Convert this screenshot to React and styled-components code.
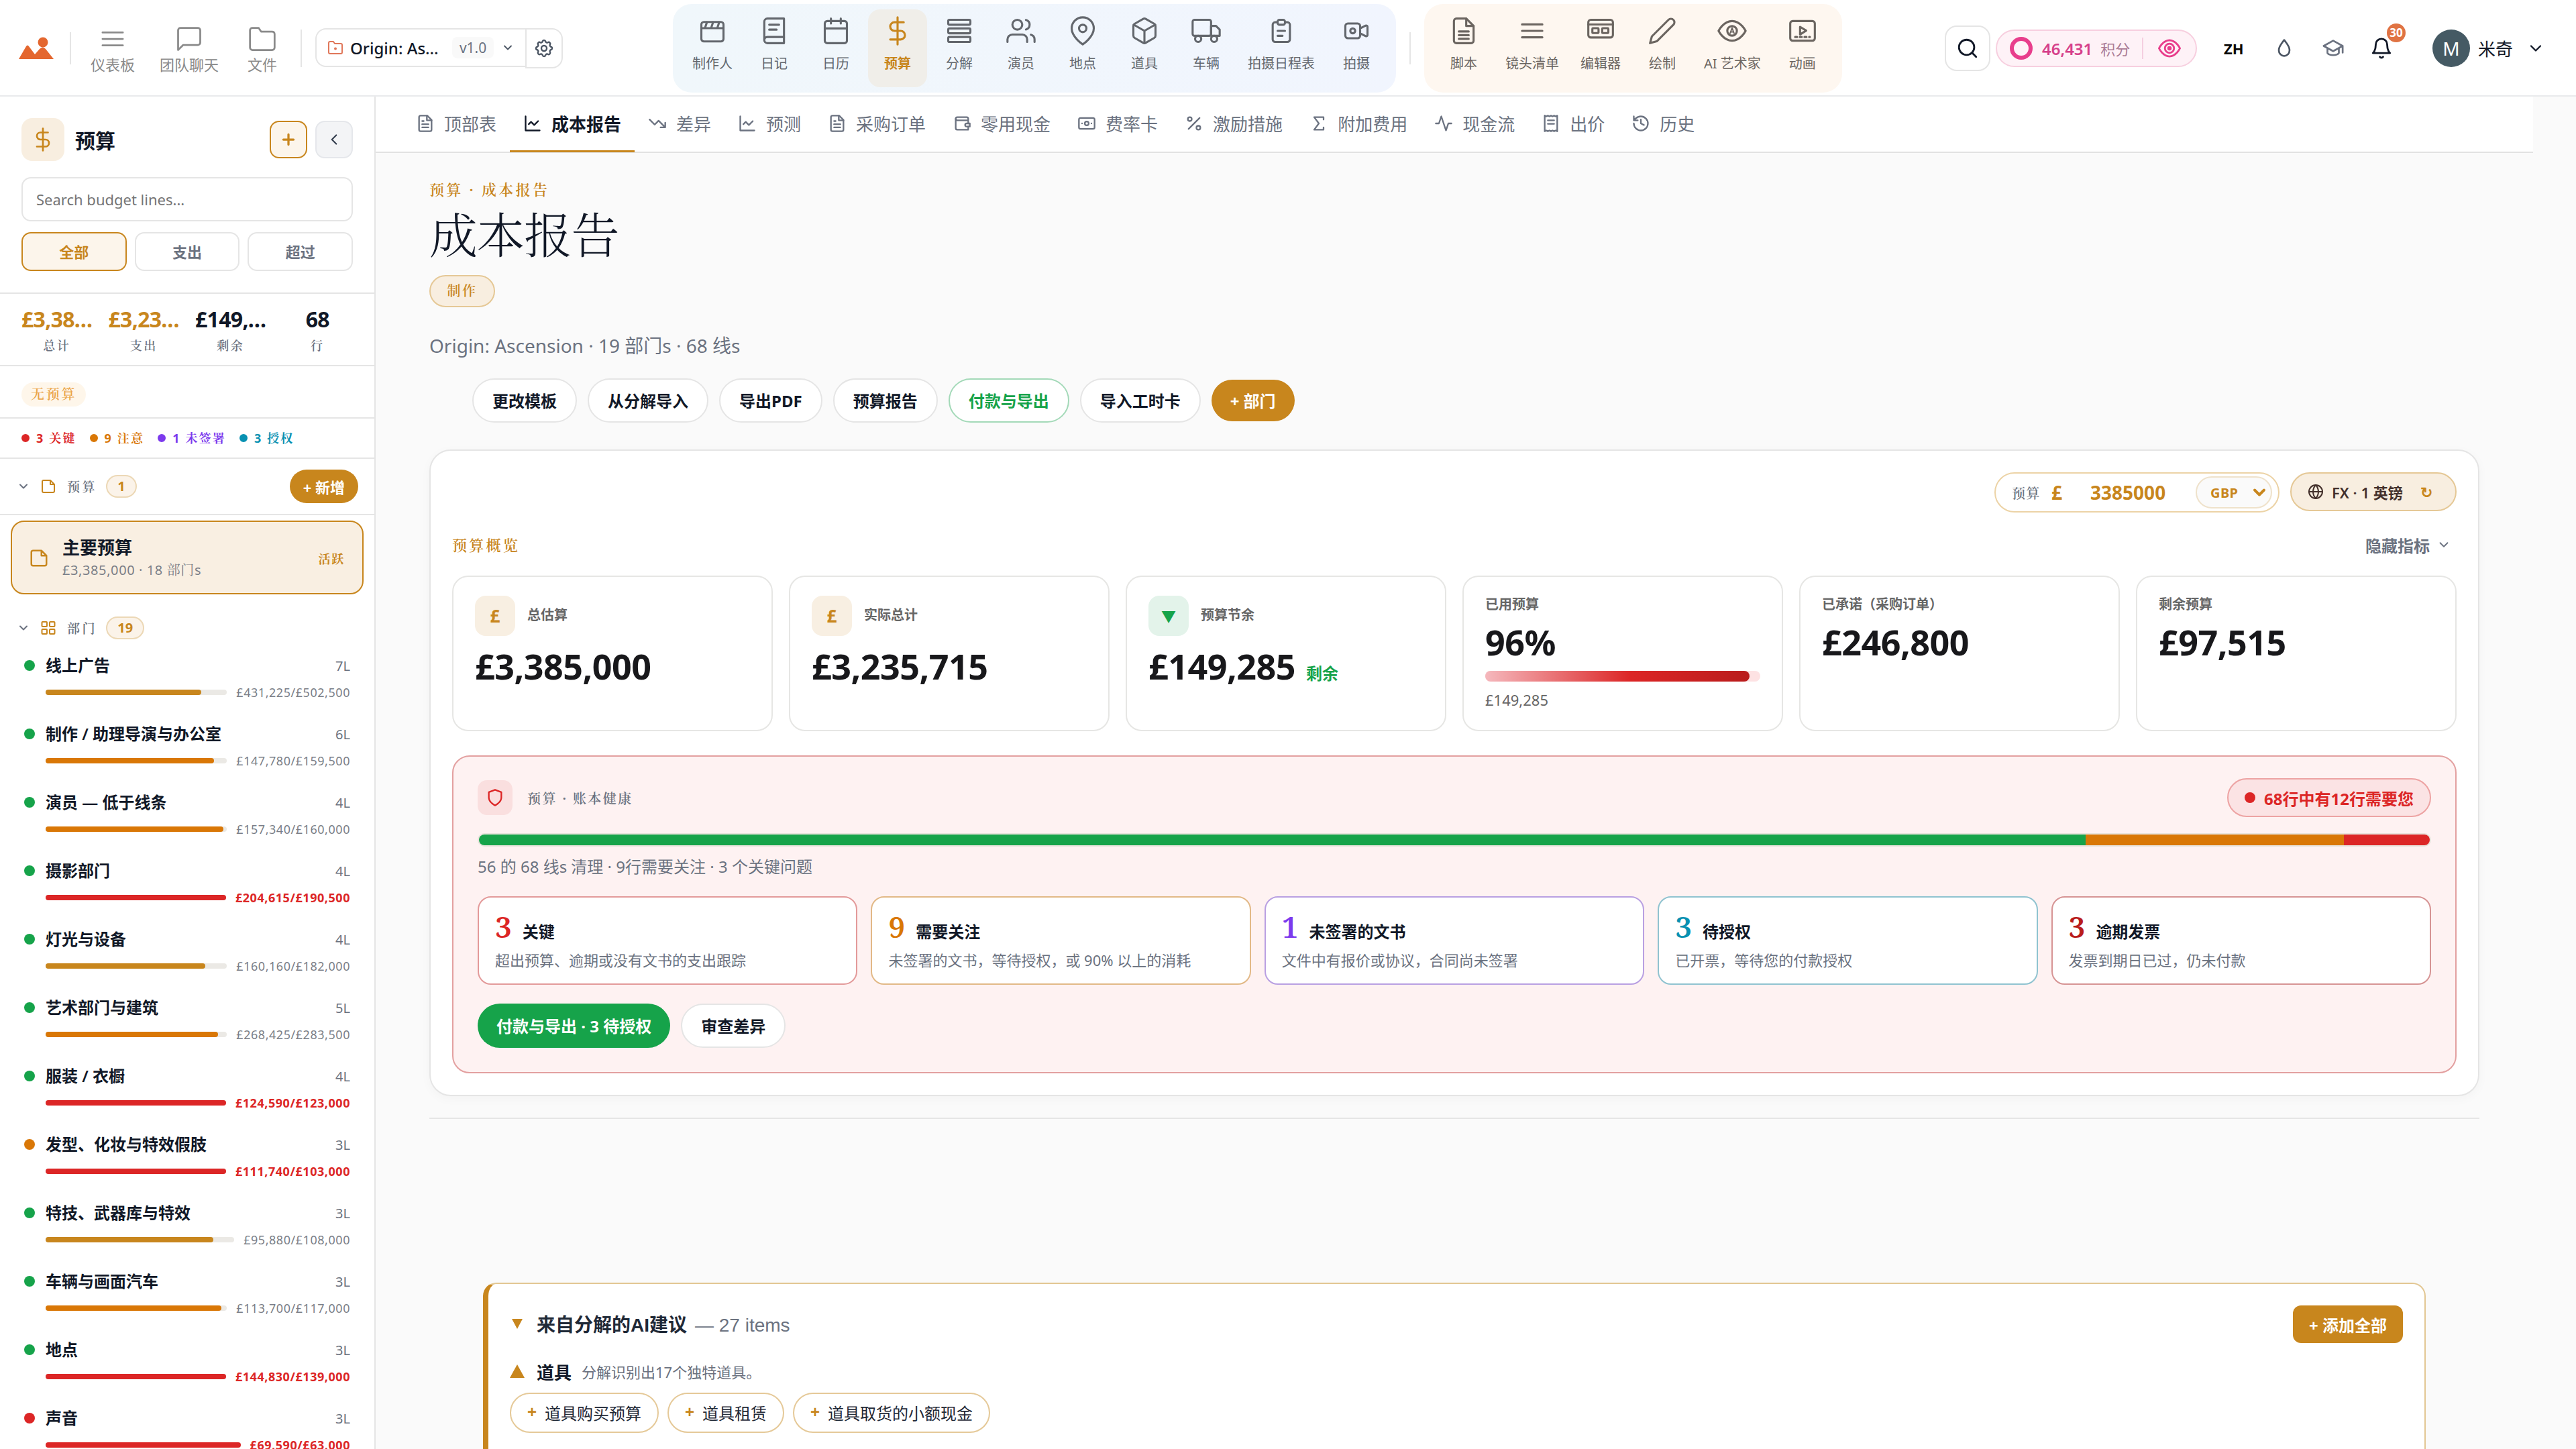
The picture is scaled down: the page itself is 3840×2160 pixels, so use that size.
import React from 'react';
import styled, {createGlobalStyle} from 'styled-components';

const colors = {
  amber: '#c8861d',
  amberSoft: '#f8eee0',
  amberLine: '#e5c896',
  ink: '#111827',
  gray: '#6b7280',
  line: '#e5e5e5',
  green: '#16a34a',
  orange: '#d97706',
  red: '#dc2626',
  purple: '#7c3aed',
  teal: '#0891b2',
  darkRed: '#b91c1c',
};
const sans = "'Noto Sans', 'Noto Sans CJK SC', sans-serif";
const label = "'Noto Sans', 'Noto Serif CJK SC', 'Noto Serif SC', serif";
const serif = "'Noto Serif', 'Noto Serif CJK SC', 'Noto Serif SC', serif";

const GlobalStyle = createGlobalStyle`
  * {
    box-sizing: border-box;
  }
  body {
    margin: 0;
    background: #fafafa;
    font-family: ${sans};
    color: ${colors.ink};
  }
  button {
    font-family: inherit;
    margin: 0;
  }
`;

const Page = styled.div`
  width: 3840px;
  height: 2160px;
  overflow: hidden;
  display: flex;
  flex-direction: column;
  white-space: nowrap;
`;

/* ---------- icons ---------- */
const Svg = styled.svg`
  width: ${(p) => p.$size || 28}px;
  height: ${(p) => p.$size || 28}px;
  flex: none;
  display: block;
  fill: none;
  stroke: currentColor;
  stroke-width: ${(p) => p.$stroke || 2};
  stroke-linecap: round;
  stroke-linejoin: round;
`;

const paths = {
  bars: <path d="M3.75 6.75h16.5M3.75 12h16.5M3.75 17.25h16.5" />,
  chat: <path d="M21 15a2 2 0 0 1-2 2H7l-4 4V5a2 2 0 0 1 2-2h14a2 2 0 0 1 2 2z" />,
  folder: (
    <path d="M22 19a2 2 0 0 1-2 2H4a2 2 0 0 1-2-2V5a2 2 0 0 1 2-2h5l2 3h9a2 2 0 0 1 2 2z" />
  ),
  folderDot: (
    <>
      <path d="M22 19a2 2 0 0 1-2 2H4a2 2 0 0 1-2-2V5a2 2 0 0 1 2-2h5l2 3h9a2 2 0 0 1 2 2z" />
      <circle cx="12" cy="13.5" r="1" />
    </>
  ),
  chevronDown: <path d="m6 9 6 6 6-6" />,
  chevronLeft: <path d="m15 18-6-6 6-6" />,
  plus: <path d="M5 12h14M12 5v14" />,
  gear: (
    <>
      <path d="M10.3 4.3c.4-1.7 2.9-1.7 3.4 0a1.7 1.7 0 0 0 2.6 1.1c1.5-.9 3.3.8 2.4 2.4a1.7 1.7 0 0 0 1 2.5c1.8.4 1.8 2.9 0 3.4a1.7 1.7 0 0 0-1 2.5c.9 1.6-.9 3.3-2.4 2.4a1.7 1.7 0 0 0-2.6 1.1c-.4 1.7-2.9 1.7-3.4 0a1.7 1.7 0 0 0-2.6-1.1c-1.5.9-3.3-.8-2.4-2.4a1.7 1.7 0 0 0-1-2.5c-1.8-.4-1.8-2.9 0-3.4a1.7 1.7 0 0 0 1-2.5c-.9-1.6.9-3.3 2.4-2.4 1 .6 2.3.1 2.6-1.1z" />
      <circle cx="12" cy="12" r="3" />
    </>
  ),
  clapper: (
    <>
      <rect x="3" y="4.8" width="18" height="15.8" rx="2" />
      <path d="M3 9.8h18M7.5 5 6 9.6M12.5 5 11 9.6M17.5 5 16 9.6" />
    </>
  ),
  diary: (
    <>
      <path d="M4 19.5A2.5 2.5 0 0 1 6.5 17H20" />
      <path d="M6.5 2H20v20H6.5A2.5 2.5 0 0 1 4 19.5v-15A2.5 2.5 0 0 1 6.5 2z" />
      <path d="M8 7h8M8 11h6" />
    </>
  ),
  calendar: (
    <>
      <rect x="3" y="4" width="18" height="18" rx="2" />
      <path d="M16 2v4M8 2v4M3 10h18" />
    </>
  ),
  dollar: <path d="M12 1v22M17 5H9.5a3.5 3.5 0 0 0 0 7h5a3.5 3.5 0 0 1 0 7H6" />,
  stack: (
    <>
      <rect x="3" y="3" width="18" height="4" rx="1" />
      <rect x="3" y="10" width="18" height="4" rx="1" />
      <rect x="3" y="17" width="18" height="4" rx="1" />
    </>
  ),
  users: (
    <>
      <path d="M17 21v-2a4 4 0 0 0-4-4H5a4 4 0 0 0-4 4v2" />
      <circle cx="9" cy="7" r="4" />
      <path d="M23 21v-2a4 4 0 0 0-3-3.87M16 3.13a4 4 0 0 1 0 7.75" />
    </>
  ),
  pin: (
    <>
      <path d="M21 10c0 7-9 13-9 13s-9-6-9-13a9 9 0 0 1 18 0z" />
      <circle cx="12" cy="10" r="3" />
    </>
  ),
  box: (
    <>
      <path d="M21 16V8a2 2 0 0 0-1-1.73l-7-4a2 2 0 0 0-2 0l-7 4A2 2 0 0 0 3 8v8a2 2 0 0 0 1 1.73l7 4a2 2 0 0 0 2 0l7-4A2 2 0 0 0 21 16z" />
      <path d="M3.27 6.96 12 12.01l8.73-5.05M12 22.08V12" />
    </>
  ),
  truck: (
    <>
      <rect x="1" y="3" width="15" height="13" rx="1.5" />
      <path d="M16 8h4l3 3v5h-7z" />
      <circle cx="5.5" cy="18.5" r="2.5" />
      <circle cx="18.5" cy="18.5" r="2.5" />
    </>
  ),
  clipboard: (
    <>
      <path d="M9 5H7a2 2 0 0 0-2 2v12a2 2 0 0 0 2 2h10a2 2 0 0 0 2-2V7a2 2 0 0 0-2-2h-2" />
      <rect x="9" y="3" width="6" height="4" rx="1.5" />
      <path d="M9 12h6M9 16h4" />
    </>
  ),
  camera: (
    <>
      <path d="m15 10 4.553-2.276A1 1 0 0 1 21 8.618v6.764a1 1 0 0 1-1.447.894L15 14M5 18h8a2 2 0 0 0 2-2V8a2 2 0 0 0-2-2H5a2 2 0 0 0-2 2v8a2 2 0 0 0 2 2z" />
      <circle cx="9" cy="12" r="2" />
    </>
  ),
  script: (
    <>
      <path d="M14 2H6a2 2 0 0 0-2 2v16a2 2 0 0 0 2 2h12a2 2 0 0 0 2-2V8z" />
      <path d="M14 2v6h6M8 12.5h8M8 15.5h8M8 18.5h8" />
    </>
  ),
  editor: (
    <>
      <rect x="2" y="3" width="20" height="14.4" rx="2" />
      <rect x="5.3" y="9.8" width="5" height="4" rx="0.5" />
      <rect x="13.3" y="9.8" width="5" height="4" rx="0.5" />
      <path d="M2 6.8h20" />
    </>
  ),
  pencil: <path d="M17 3a2.828 2.828 0 1 1 4 4L7.5 20.5 2 22l1.5-5.5L17 3z" />,
  aiEye: (
    <>
      <path d="M1 12s4-8 11-8 11 8 11 8-4 8-11 8-11-8-11-8z" />
      <circle cx="12" cy="12" r="3.9" />
      <path d="m10.4 14 1.6-4.4 1.6 4.4M11 12.9h2" strokeWidth="1" />
    </>
  ),
  animation: (
    <>
      <rect x="2" y="4" width="20" height="16" rx="2" />
      <path d="m10 8.7 5 3.1-5 3.1z" />
      <path d="M6 17h12" strokeDasharray="1.6 2.2" />
    </>
  ),
  search: (
    <>
      <circle cx="11" cy="11" r="8" />
      <path d="m21 21-4.35-4.35" />
    </>
  ),
  target: (
    <>
      <path d="M1 12s4-8.5 11-8.5S23 12 23 12s-4 8.5-11 8.5S1 12 1 12z" />
      <circle cx="12" cy="12" r="4.8" />
      <circle cx="12" cy="12" r="1.3" fill="currentColor" />
    </>
  ),
  drop: <path d="M12 2.7c2.6 3.6 6 7 6 11.3a6 6.6 0 0 1-12 0c0-4.3 3.4-7.7 6-11.3z" />,
  cap: (
    <>
      <path d="m12 4 10 5.5-10 5.5L2 9.5zM22 9.5v7" />
      <path d="M6 12v5c2 3 10 3 12 0v-5" />
    </>
  ),
  bell: (
    <>
      <path d="M6 8a6 6 0 0 1 12 0c0 7 3 9 3 9H3s3-2 3-9" />
      <path d="M10.3 21a1.94 1.94 0 0 0 3.4 0" />
    </>
  ),
  fileText: (
    <>
      <path d="M14.5 2H6a2 2 0 0 0-2 2v16a2 2 0 0 0 2 2h12a2 2 0 0 0 2-2V7.5z" />
      <path d="M14 2v6h6M8 13h8M8 17h8M8 9h2" />
    </>
  ),
  chart: <path d="M3 3v18h18M19 9l-5 5-4-4-3 3" />,
  trendDown: <path d="m22 17-8.5-8.5-5 5L2 7M16 17h6v-6" />,
  wallet: (
    <>
      <path d="M20 8V6a2 2 0 0 0-2-2H6a2 2 0 0 0 0 4h14v4" />
      <path d="M4 6v12c0 1.1.9 2 2 2h14v-4" />
      <path d="M18 12a2 2 0 0 0 0 4h4v-4z" />
    </>
  ),
  banknote: (
    <>
      <rect x="2" y="5" width="20" height="14" rx="2" />
      <circle cx="12" cy="12" r="2.5" />
      <path d="M6 12h.01M18 12h.01" />
    </>
  ),
  percent: (
    <>
      <path d="M19 5 5 19" />
      <circle cx="6.5" cy="6.5" r="2.5" />
      <circle cx="17.5" cy="17.5" r="2.5" />
    </>
  ),
  sigma: <path d="M18 7V4H6l6 8-6 8h12v-3" />,
  activity: <path d="M22 12h-4l-3 9L9 3l-3 9H2" />,
  receipt: (
    <>
      <path d="M4 2v20l2-1 2 1 2-1 2 1 2-1 2 1 2-1 2 1V2l-2 1-2-1-2 1-2-1-2 1-2-1-2 1z" />
      <path d="M8 8h8M8 12.5h8" />
    </>
  ),
  history: <path d="M3 12a9 9 0 1 0 9-9 9.75 9.75 0 0 0-6.74 2.74L3 8M3 3v5h5M12 7v5l4 2" />,
  file: (
    <path d="M15 3H5a2 2 0 0 0-2 2v14a2 2 0 0 0 2 2h14a2 2 0 0 0 2-2V9zM15 3v6h6" />
  ),
  grid: (
    <>
      <rect x="2.5" y="3" width="7.5" height="7" rx="1" />
      <rect x="14" y="3" width="7.5" height="7" rx="1" />
      <rect x="14" y="14" width="7.5" height="7" rx="1" />
      <rect x="2.5" y="14" width="7.5" height="7" rx="1" />
    </>
  ),
  globe: (
    <>
      <circle cx="12" cy="12" r="10" />
      <path d="M2 12h20M12 2a15.3 15.3 0 0 1 4 10 15.3 15.3 0 0 1-4 10 15.3 15.3 0 0 1-4-10 15.3 15.3 0 0 1 4-10z" />
    </>
  ),
  shield: <path d="M12 22s8-4 8-10V5l-8-3-8 3v7c0 6 8 10 8 10z" />,
};

const Icon = ({name, size, stroke}) => (
  <Svg viewBox="0 0 24 24" $size={size} $stroke={stroke}>
    {paths[name]}
  </Svg>
);

/* ---------- header ---------- */
const Header = styled.header`
  height: 144px;
  flex: none;
  display: flex;
  align-items: center;
  background: #fff;
  border-bottom: 2px solid #e9eaec;
  padding: 2px 46px 0 28px;
`;
const HeaderLeft = styled.div`
  display: flex;
  align-items: center;
  width: 975px;
`;
const Logo = styled.svg`
  width: 52px;
  height: 36px;
  margin-right: 24px;
  fill: #e4672f;
`;
const VLine = styled.div`
  width: 2px;
  height: ${(p) => p.$h}px;
  background: ${(p) => p.$color || '#e5e5e5'};
  margin: ${(p) => p.$margin || 0};
`;
const NavItem = styled.div`
  display: flex;
  flex-direction: column;
  align-items: center;
  gap: 2px;
  margin-right: ${(p) => p.$gap}px;
  padding-top: 1px;
  color: #8a8a8a;
  font-size: 22px;
  line-height: 28px;
`;
const ProjectPicker = styled.div`
  display: flex;
  align-items: flex-start;
  height: 60px;
  color: #4b5563;
`;
const ProjectMain = styled.div`
  display: flex;
  align-items: center;
  width: 313px;
  height: 58px;
  padding-left: 16px;
  border: 2px solid ${colors.line};
  border-right: 0;
  border-radius: 16px 0 0 16px;
`;
const ProjectFolder = styled.span`
  color: #e0775a;
  margin-right: 10px;
`;
const ProjectName = styled.span`
  color: ${colors.ink};
  font-size: 24px;
  font-weight: 500;
  width: 152px;
`;
const Version = styled.span`
  width: 62px;
  height: 32px;
  margin-right: 11px;
  border-radius: 8px;
  background: #f9f9f9;
  color: ${colors.gray};
  font-size: 21px;
  line-height: 32px;
  text-align: center;
`;
const ProjectGear = styled.div`
  display: flex;
  align-items: center;
  justify-content: center;
  width: 56px;
  height: 60px;
  border: 2px solid ${colors.line};
  border-radius: 0 16px 16px 0;
`;
const ToolGroup = styled.div`
  display: flex;
  gap: 4px;
  height: 132px;
  padding: 8px 15px;
  border-radius: 28px;
  background: ${(p) => p.$bg};
`;
const Tool = styled.div`
  display: flex;
  flex-direction: column;
  align-items: center;
  gap: 13px;
  min-width: 88px;
  height: 116px;
  padding: 10px 14px 0;
  border-radius: 18px;
  font-size: 20px;
  line-height: 28px;
  color: ${(p) => (p.$active ? colors.amber : p.$warm ? '#6b6560' : '#63676d')};
  font-weight: ${(p) => (p.$active ? 700 : 400)};
  background: ${(p) => (p.$active ? '#f0eee9' : 'transparent')};
`;
const HeaderRight = styled.div`
  display: flex;
  align-items: center;
  margin-left: auto;
`;
const SearchButton = styled.div`
  display: flex;
  align-items: center;
  justify-content: center;
  width: 68px;
  height: 68px;
  border: 2px solid ${colors.line};
  border-radius: 18px;
`;
const Credits = styled.div`
  display: flex;
  align-items: center;
  width: 300px;
  height: 56px;
  margin: 0 40px 0 8px;
  padding-left: 19px;
  border: 2px solid #f7cfdf;
  border-radius: 28px;
  background: #fef2f7;
  color: #e83e8c;
`;
const Ring = styled.div`
  width: 34px;
  height: 34px;
  border: 6px solid #e83e8c;
  border-radius: 50%;
  margin-right: 14px;
`;
const CreditCount = styled.span`
  font-size: 24px;
  font-weight: 600;
  color: #d6408a;
  margin-right: 12px;
`;
const CreditUnit = styled.span`
  font-size: 22px;
  color: #ab7c95;
`;
const Lang = styled.span`
  width: 32px;
  font-size: 22px;
  font-weight: 700;
  color: #0a0a0a;
`;
const HeaderIcon = styled.span`
  display: flex;
  position: relative;
  margin-left: ${(p) => p.$ml}px;
  color: ${(p) => p.$color};
`;
const Badge = styled.span`
  position: absolute;
  top: -20px;
  right: -19px;
  width: 28px;
  height: 28px;
  border-radius: 50%;
  background: #e07343;
  color: #fff;
  font-size: 17px;
  font-weight: 700;
  line-height: 27px;
  text-align: center;
`;
const Avatar = styled.span`
  width: 56px;
  height: 56px;
  margin: 0 12px 0 59px;
  border-radius: 50%;
  background: #455a64;
  color: #fff;
  font-size: 28px;
  line-height: 56px;
  text-align: center;
`;
const UserName = styled.span`
  font-size: 26px;
  margin-right: 20px;
`;

const productionTools = [
  ['clapper', '制作人'],
  ['diary', '日记'],
  ['calendar', '日历'],
  ['dollar', '预算'],
  ['stack', '分解'],
  ['users', '演员'],
  ['pin', '地点'],
  ['box', '道具'],
  ['truck', '车辆'],
  ['clipboard', '拍摄日程表'],
  ['camera', '拍摄'],
];
const creativeTools = [
  ['script', '脚本'],
  ['bars', '镜头清单'],
  ['editor', '编辑器'],
  ['pencil', '绘制'],
  ['aiEye', 'AI 艺术家'],
  ['animation', '动画'],
];

const TopHeader = () => (
  <Header>
    <HeaderLeft>
      <Logo viewBox="0 0 52 36">
        <path d="M0 34 11 15q2-3 4 0l9 12 7-8q5-5 9 0l12 15z" />
        <circle cx="36" cy="9" r="7.5" />
      </Logo>
      <VLine $h={48} $margin="0 29px 0 0" />
      <NavItem $gap={37}>
        <Icon name="bars" size={44} stroke={1.5} />
        仪表板
      </NavItem>
      <NavItem $gap={43}>
        <Icon name="chat" size={44} stroke={1.5} />
        团队聊天
      </NavItem>
      <NavItem $gap={35}>
        <Icon name="folder" size={44} stroke={1.5} />
        文件
      </NavItem>
      <VLine $h={56} $margin="0 20px 0 0" />
      <ProjectPicker>
        <ProjectMain>
          <ProjectFolder>
            <Icon name="folderDot" size={24} />
          </ProjectFolder>
          <ProjectName>Origin: As...</ProjectName>
          <Version>v1.0</Version>
          <Icon name="chevronDown" size={20} stroke={2.2} />
        </ProjectMain>
        <ProjectGear>
          <Icon name="gear" size={32} stroke={1.8} />
        </ProjectGear>
      </ProjectPicker>
    </HeaderLeft>
    <ToolGroup $bg="linear-gradient(90deg, #f0f7fb, #f1f5fe)">
      {productionTools.map(([icon, text]) => (
        <Tool key={text} $active={text === '预算'}>
          <Icon name={icon} size={44} stroke={1.7} />
          {text}
        </Tool>
      ))}
    </ToolGroup>
    <VLine $h={48} $margin="0 20px" />
    <ToolGroup $bg="#fef7f0">
      {creativeTools.map(([icon, text]) => (
        <Tool key={text} $warm>
          <Icon name={icon} size={44} stroke={1.7} />
          {text}
        </Tool>
      ))}
    </ToolGroup>
    <HeaderRight>
      <SearchButton>
        <Icon name="search" size={34} />
      </SearchButton>
      <Credits>
        <Ring />
        <CreditCount>46,431</CreditCount>
        <CreditUnit>积分</CreditUnit>
        <VLine $h={32} $color="#f5cfe0" $margin="0 22px 0 18px" />
        <Icon name="target" size={34} />
      </Credits>
      <Lang>ZH</Lang>
      <HeaderIcon $ml={42} $color="#4b5563">
        <Icon name="drop" size={32} />
      </HeaderIcon>
      <HeaderIcon $ml={40} $color="#6b7280">
        <Icon name="cap" size={34} stroke={1.9} />
      </HeaderIcon>
      <HeaderIcon $ml={38} $color="#111827">
        <Icon name="bell" size={34} />
        <Badge>30</Badge>
      </HeaderIcon>
      <Avatar>M</Avatar>
      <UserName>米奇</UserName>
      <Icon name="chevronDown" size={28} />
    </HeaderRight>
  </Header>
);

/* ---------- sidebar ---------- */
const Body = styled.div`
  flex: 1;
  min-height: 0;
  display: flex;
`;
const Sidebar = styled.aside`
  width: 560px;
  flex: none;
  overflow: hidden;
  background: #fff;
  border-right: 2px solid ${colors.line};
`;
const SideTop = styled.div`
  height: 294px;
  padding: 32px 32px 0;
  border-bottom: 2px solid ${colors.line};
`;
const SideTitle = styled.div`
  display: flex;
  align-items: center;
  height: 64px;
  font-size: 30px;
  font-weight: 700;
`;
const DollarBox = styled.span`
  display: flex;
  align-items: center;
  justify-content: center;
  width: 64px;
  height: 64px;
  margin-right: 16px;
  border-radius: 16px;
  background: ${colors.amberSoft};
  color: ${colors.amber};
`;
const SquareButton = styled.button`
  display: flex;
  align-items: center;
  justify-content: center;
  width: 56px;
  height: 56px;
  margin-left: ${(p) => (p.$primary ? 'auto' : '12px')};
  padding: 0;
  border: 2px solid ${(p) => (p.$primary ? colors.amber : '#e5e7eb')};
  border-radius: 14px;
  background: ${(p) => (p.$primary ? '#fcf5eb' : '#f3f4f6')};
  color: ${(p) => (p.$primary ? colors.amber : '#374151')};
`;
const SearchField = styled.div`
  height: 66px;
  margin: 24px 0 16px;
  padding-left: 20px;
  border: 2px solid ${colors.line};
  border-radius: 14px;
  font-size: 22px;
  line-height: 62px;
  color: #757575;
`;
const Filters = styled.div`
  display: grid;
  grid-template-columns: repeat(3, 1fr);
  gap: 12px;
`;
const Filter = styled.button`
  height: 58px;
  padding: 0 0 2px;
  border: 2px solid ${(p) => (p.$active ? colors.amber : colors.line)};
  border-radius: 14px;
  background: ${(p) => (p.$active ? '#fcf5eb' : '#fff')};
  color: ${(p) => (p.$active ? colors.amber : colors.gray)};
  font-size: 22px;
  font-weight: 600;
`;
const Stats = styled.div`
  display: grid;
  grid-template-columns: repeat(4, minmax(0, 1fr));
  gap: 24px;
  height: 108px;
  padding: 15px 32px 0;
  border-bottom: 2px solid ${colors.line};
  text-align: center;
`;
const StatValue = styled.div`
  font-size: 32px;
  font-weight: 700;
  letter-spacing: -0.7px;
  line-height: 46px;
  color: ${(p) => (p.$amber ? colors.amber : colors.ink)};
`;
const StatLabel = styled.div`
  font-family: ${label};
  font-size: 18px;
  font-weight: 600;
  letter-spacing: 2.4px;
  line-height: 32px;
  color: ${colors.gray};
`;
const NoBudgetRow = styled.div`
  display: flex;
  align-items: center;
  height: 78px;
  padding: 7px 32px 0;
  border-bottom: 2px solid ${colors.line};
`;
const NoBudget = styled.span`
  height: 36px;
  padding: 0 14px;
  border-radius: 18px;
  background: #fef6ea;
  color: #eba548;
  font-family: ${label};
  font-size: 20px;
  font-weight: 600;
  letter-spacing: 2.8px;
  line-height: 36px;
`;
const Flags = styled.div`
  display: flex;
  align-items: center;
  gap: 20px;
  height: 60px;
  padding: 0 32px;
  border-bottom: 2px solid ${colors.line};
`;
const Flag = styled.span`
  display: flex;
  align-items: center;
  gap: 10px;
  color: ${(p) => p.$color};
  font-family: ${label};
  font-size: 18px;
  font-weight: 700;
  letter-spacing: 2.15px;
  line-height: 28px;
`;
const Dot = styled.i`
  flex: none;
  width: ${(p) => p.$size}px;
  height: ${(p) => p.$size}px;
  border-radius: 50%;
  background: ${(p) => p.$color};
`;
const SectionHead = styled.div`
  display: flex;
  align-items: center;
  height: ${(p) => p.$h}px;
  padding: 0 24px 0 25px;
  border-bottom: ${(p) => (p.$line ? `2px solid ${colors.line}` : '0')};
  color: ${colors.gray};
`;
const SectionIcon = styled.span`
  margin: 0 16px 0 15px;
  color: ${colors.amber};
`;
const SectionName = styled.span`
  font-family: ${label};
  font-size: 19px;
  font-weight: 600;
  letter-spacing: 3.6px;
  margin-right: 13px;
`;
const Count = styled.span`
  height: 34px;
  padding: 0 15px;
  border: 2px solid #ecd8b6;
  border-radius: 17px;
  background: #fbf3e9;
  color: ${colors.amber};
  font-size: 20px;
  font-weight: 700;
  line-height: 30px;
`;
const NewButton = styled.button`
  height: 50px;
  margin-left: auto;
  padding: 0 20px;
  border: 0;
  border-radius: 25px;
  background: ${colors.amber};
  color: #fff;
  font-size: 22px;
  font-weight: 700;
`;
const BudgetCard = styled.div`
  display: flex;
  align-items: center;
  height: 110px;
  margin: 8px 16px 16px;
  padding: 2px 26px 0 25px;
  border: 2px solid ${colors.amber};
  border-radius: 20px;
  background: #f9efe2;
  color: ${colors.amber};
`;
const BudgetText = styled.div`
  flex: 1;
  margin-left: 20px;
`;
const BudgetName = styled.div`
  font-size: 26px;
  font-weight: 700;
  line-height: 36px;
  color: ${colors.ink};
`;
const BudgetMeta = styled.div`
  font-family: ${label};
  font-size: 20px;
  letter-spacing: 0.6px;
  line-height: 32px;
  color: #7b7f88;
`;
const BudgetState = styled.span`
  font-family: ${label};
  font-size: 18px;
  font-weight: 700;
  letter-spacing: 1.8px;
`;
const Dept = styled.div`
  height: 102px;
  padding: 4px 36px 0;
`;
const DeptHead = styled.div`
  display: flex;
  align-items: center;
  height: 36px;
  color: ${colors.gray};
  font-size: 20px;
`;
const DeptName = styled.span`
  flex: 1;
  margin-left: 16px;
  padding-bottom: 3px;
  color: ${colors.ink};
  font-size: 24px;
  font-weight: 600;
`;
const DeptFoot = styled.div`
  display: flex;
  align-items: center;
  gap: 14px;
  height: 30px;
  margin: 7px 0 0 32px;
`;
const Track = styled.div`
  flex: 1;
  height: 8px;
  border-radius: 4px;
  background: #ebe9e5;
`;
const Fill = styled.div`
  height: 8px;
  border-radius: 4px;
  background: ${(p) => p.$color};
`;
const Amount = styled.span`
  padding-bottom: 1px;
  font-size: 18px;
  letter-spacing: 0.54px;
  color: ${(p) => (p.$over ? colors.red : '#7b7f88')};
  font-weight: ${(p) => (p.$over ? 700 : 400)};
`;

const departments = [
  ['线上广告', 7, 431225, 502500],
  ['制作 / 助理导演与办公室', 6, 147780, 159500],
  ['演员 — 低于线条', 4, 157340, 160000],
  ['摄影部门', 4, 204615, 190500],
  ['灯光与设备', 4, 160160, 182000],
  ['艺术部门与建筑', 5, 268425, 283500],
  ['服装 / 衣橱', 4, 124590, 123000],
  ['发型、化妆与特效假肢', 3, 111740, 103000, colors.orange],
  ['特技、武器库与特效', 3, 95880, 108000],
  ['车辆与画面汽车', 3, 113700, 117000],
  ['地点', 3, 144830, 139000],
  ['声音', 3, 69590, 63000, colors.red],
];

const money = (n) => '£' + n.toLocaleString('en-US');

const Department = ({name, lines, spent, budget, status}) => {
  const ratio = spent / budget;
  const over = ratio > 1;
  const color = over ? colors.red : ratio > 0.9 ? colors.orange : colors.amber;
  return (
    <Dept>
      <DeptHead>
        <Dot $size={16} $color={status || colors.green} />
        <DeptName>{name}</DeptName>
        {lines}L
      </DeptHead>
      <DeptFoot>
        <Track>
          <Fill $color={color} style={{width: `${Math.min(100, Math.round(ratio * 100))}%`}} />
        </Track>
        <Amount $over={over}>
          {money(spent)}/{money(budget)}
        </Amount>
      </DeptFoot>
    </Dept>
  );
};

const BudgetSidebar = () => (
  <Sidebar>
    <SideTop>
      <SideTitle>
        <DollarBox>
          <Icon name="dollar" size={36} stroke={1.8} />
        </DollarBox>
        预算
        <SquareButton $primary>
          <Icon name="plus" size={26} stroke={3} />
        </SquareButton>
        <SquareButton>
          <Icon name="chevronLeft" size={26} />
        </SquareButton>
      </SideTitle>
      <SearchField>Search budget lines...</SearchField>
      <Filters>
        <Filter $active>全部</Filter>
        <Filter>支出</Filter>
        <Filter>超过</Filter>
      </Filters>
    </SideTop>
    <Stats>
      <div>
        <StatValue $amber>£3,38…</StatValue>
        <StatLabel>总计</StatLabel>
      </div>
      <div>
        <StatValue $amber>£3,23…</StatValue>
        <StatLabel>支出</StatLabel>
      </div>
      <div>
        <StatValue>£149,…</StatValue>
        <StatLabel>剩余</StatLabel>
      </div>
      <div>
        <StatValue>68</StatValue>
        <StatLabel>行</StatLabel>
      </div>
    </Stats>
    <NoBudgetRow>
      <NoBudget>无预算</NoBudget>
    </NoBudgetRow>
    <Flags>
      <Flag $color={colors.red}>
        <Dot $size={12} $color={colors.red} />3 关键
      </Flag>
      <Flag $color={colors.orange}>
        <Dot $size={12} $color={colors.orange} />9 注意
      </Flag>
      <Flag $color={colors.purple}>
        <Dot $size={12} $color={colors.purple} />1 未签署
      </Flag>
      <Flag $color={colors.teal}>
        <Dot $size={12} $color={colors.teal} />3 授权
      </Flag>
    </Flags>
    <SectionHead $h={84} $line>
      <Icon name="chevronDown" size={20} stroke={2.4} />
      <SectionIcon>
        <Icon name="file" size={24} />
      </SectionIcon>
      <SectionName>预算</SectionName>
      <Count>1</Count>
      <NewButton>+ 新增</NewButton>
    </SectionHead>
    <BudgetCard>
      <Icon name="file" size={30} />
      <BudgetText>
        <BudgetName>主要预算</BudgetName>
        <BudgetMeta>£3,385,000 · 18 部门s</BudgetMeta>
      </BudgetText>
      <BudgetState>活跃</BudgetState>
    </BudgetCard>
    <SectionHead $h={68}>
      <Icon name="chevronDown" size={20} stroke={2.4} />
      <SectionIcon>
        <Icon name="grid" size={24} />
      </SectionIcon>
      <SectionName>部门</SectionName>
      <Count>19</Count>
    </SectionHead>
    {departments.map(([name, lines, spent, budget, status]) => (
      <Department
        key={name}
        name={name}
        lines={lines}
        spent={spent}
        budget={budget}
        status={status}
      />
    ))}
  </Sidebar>
);

/* ---------- main ---------- */
const Main = styled.main`
  flex: 1;
  min-width: 0;
  overflow: hidden;
`;
const Tabs = styled.nav`
  display: flex;
  width: 3216px;
  height: 84px;
  padding-left: 40px;
  background: #fff;
  border-bottom: 2px solid #e2e2e2;
`;
const Tab = styled.div`
  display: flex;
  align-items: center;
  gap: 14px;
  height: 83px;
  padding: 0 20px;
  border-bottom: 3px solid ${(p) => (p.$active ? colors.amber : 'transparent')};
  color: ${(p) => (p.$active ? colors.ink : colors.gray)};
  font-size: 26px;
  font-weight: ${(p) => (p.$active ? 700 : 400)};
`;
const Content = styled.div`
  padding: 38px 144px 0 80px;
`;
const Eyebrow = styled.div`
  font-family: ${label};
  font-size: 22px;
  font-weight: 600;
  letter-spacing: 3.3px;
  line-height: 32px;
  color: ${colors.amber};
`;
const Title = styled.h1`
  margin: 8px 0 18px;
  font-family: ${serif};
  font-size: 72px;
  font-weight: 300;
  letter-spacing: -1.5px;
  line-height: 86px;
`;
const Stage = styled.span`
  display: block;
  width: 98px;
  height: 48px;
  border: 2px solid ${colors.amberLine};
  border-radius: 24px;
  background: ${colors.amberSoft};
  color: ${colors.amber};
  font-family: ${label};
  font-size: 20px;
  font-weight: 600;
  letter-spacing: 2.4px;
  line-height: 44px;
  text-align: center;
`;
const Subtitle = styled.div`
  margin-top: 37px;
  font-size: 28px;
  line-height: 40px;
  color: ${colors.gray};
`;
const Actions = styled.div`
  display: flex;
  align-items: center;
  gap: 16px;
  margin: ${(p) => p.$margin};
`;
const PillButton = styled.button`
  height: 66px;
  padding: 0 28px 2px;
  border: 2px solid ${(p) => (p.$green ? '#a3d9b8' : colors.line)};
  border-radius: 33px;
  background: #fff;
  color: ${(p) => (p.$green ? colors.green : colors.ink)};
  font-size: 24px;
  font-weight: 700;
`;
const SolidButton = styled(PillButton)`
  height: ${(p) => p.$h}px;
  border: 0;
  background: ${(p) => p.$bg};
  color: #fff;
`;
const Card = styled.section`
  height: 964px;
  padding: 32px;
  border: 2px solid ${colors.line};
  border-radius: 32px;
  background: #fff;
  box-shadow: 0 4px 16px rgba(0, 0, 0, 0.03);
`;
const BudgetBar = styled.div`
  display: flex;
  align-items: flex-start;
  justify-content: flex-end;
  gap: 16px;
`;
const BudgetInput = styled.div`
  display: flex;
  align-items: center;
  width: 425px;
  height: 60px;
  padding: 0 9px 0 24px;
  border: 2px solid #ecd3a6;
  border-radius: 30px;
  color: ${colors.amber};
  font-size: 28px;
  font-weight: 700;
`;
const InputLabel = styled.span`
  width: 59px;
  font-family: ${label};
  font-size: 20px;
  font-weight: 600;
  letter-spacing: 1.6px;
  color: ${colors.gray};
`;
const InputValue = styled.span`
  flex: 1;
  margin-left: 42px;
`;
const CurrencySelect = styled.span`
  display: flex;
  align-items: center;
  justify-content: space-between;
  width: 114px;
  height: 48px;
  padding: 0 3px 0 20px;
  border: 2px solid #efe2cb;
  border-radius: 24px;
  background: #fafafa;
  font-size: 20px;
  letter-spacing: 0.4px;
`;
const FxPill = styled.div`
  display: flex;
  align-items: center;
  width: 248px;
  height: 58px;
  padding-left: 24px;
  border: 2px solid ${colors.amberLine};
  border-radius: 29px;
  background: ${colors.amberSoft};
  color: #43302b;
  font-size: 22px;
  font-weight: 600;
`;
const FxText = styled.span`
  margin: 0 26px 0 12px;
`;
const FxRefresh = styled.span`
  color: ${colors.amber};
  font-size: 22px;
  font-weight: 700;
`;
const OverviewHead = styled.div`
  display: flex;
  align-items: center;
  justify-content: space-between;
  height: 40px;
  margin: 28px 0 26px;
`;
const HideMetrics = styled.span`
  display: flex;
  align-items: center;
  gap: 10px;
  margin-right: 8px;
  color: ${colors.gray};
  font-size: 24px;
  font-weight: 600;
`;
const Metrics = styled.div`
  display: grid;
  grid-template-columns: repeat(6, 1fr);
  gap: 24px;
`;
const Metric = styled.div`
  height: 232px;
  padding: 28px 32px;
  border: 2px solid #e6e6e4;
  border-radius: 24px;
`;
const MetricHead = styled.div`
  display: flex;
  align-items: center;
  gap: 18px;
  height: ${(p) => (p.$tall ? 60 : 22)}px;
  color: #666;
  font-size: 20px;
  font-weight: 600;
`;
const MetricName = styled.span`
  padding-bottom: 5px;
`;
const MetricBadge = styled.span`
  width: 60px;
  height: 60px;
  border-radius: 16px;
  background: ${(p) => (p.$green ? '#e3f3ea' : '#f8efe2')};
  color: ${(p) => (p.$green ? colors.green : colors.amber)};
  font-size: ${(p) => (p.$green ? 22 : 26)}px;
  font-weight: 700;
  line-height: 60px;
  text-align: center;
`;
const MetricValue = styled.div`
  margin-top: ${(p) => (p.$tall ? 11 : 13)}px;
  font-size: 52px;
  font-weight: 700;
  letter-spacing: -0.5px;
  line-height: 68px;
  color: #18181b;
`;
const Remaining = styled.span`
  margin-left: 16px;
  font-size: 24px;
  letter-spacing: 0;
  color: ${colors.green};
`;
const UsedTrack = styled.div`
  height: 16px;
  margin-top: 9px;
  border-radius: 8px;
  background: #fde2e3;
`;
const UsedFill = styled.div`
  height: 16px;
  border-radius: 8px;
  background: linear-gradient(90deg, #f5b8bd, ${colors.red} 55%, ${colors.darkRed});
`;
const MetricNote = styled.div`
  margin-top: 11px;
  font-size: 22px;
  line-height: 32px;
  color: #666;
`;
const Health = styled.section`
  height: 474px;
  margin-top: 36px;
  padding: 32px 36px;
  border: 2px solid #e3a0a0;
  border-radius: 26px;
  background: #fef2f2;
`;
const HealthHead = styled.div`
  display: flex;
  align-items: center;
  height: 58px;
`;
const ShieldBox = styled.span`
  display: flex;
  align-items: center;
  justify-content: center;
  width: 52px;
  height: 52px;
  margin-right: 22px;
  border-radius: 14px;
  background: #fadfdf;
  color: ${colors.red};
`;
const HealthTitle = styled.span`
  font-family: ${label};
  font-size: 20px;
  font-weight: 600;
  letter-spacing: 2.4px;
  color: ${colors.gray};
`;
const Alert = styled.span`
  display: flex;
  align-items: center;
  gap: 13px;
  height: 58px;
  margin-left: auto;
  padding: 0 24px;
  border: 2px solid #eda3a3;
  border-radius: 29px;
  background: #fbe3e4;
  color: ${colors.red};
  font-size: 24px;
  font-weight: 700;
`;
const HealthBar = styled.div`
  display: flex;
  height: 20px;
  margin-top: 24px;
  border: 2px solid #e8e3dc;
  border-radius: 10px;
  overflow: hidden;
`;
const HealthPart = styled.div`
  flex: ${(p) => p.$n};
  background: ${(p) => p.$color};
`;
const HealthNote = styled.div`
  margin: 12px 0 26px;
  font-size: 24px;
  line-height: 36px;
  color: ${colors.gray};
`;
const Issues = styled.div`
  display: grid;
  grid-template-columns: repeat(5, 1fr);
  gap: 20px;
`;
const Issue = styled.div`
  height: 132px;
  padding: 16px 24px;
  border: 2px solid ${(p) => p.$line};
  border-radius: 20px;
  background: #fff;
`;
const IssueHead = styled.div`
  display: flex;
  align-items: baseline;
  gap: 16px;
  height: 60px;
  font-size: 24px;
  font-weight: 700;
  line-height: 54px;
`;
const IssueCount = styled.span`
  font-family: ${serif};
  font-size: 44px;
  font-weight: 600;
  color: ${(p) => p.$color};
`;
const IssueText = styled.div`
  font-size: 22px;
  line-height: 34px;
  color: ${colors.gray};
`;
const Divider = styled.div`
  height: 2px;
  margin: 32px 0 244px;
  background: ${colors.line};
`;
const Suggestions = styled.section`
  height: 400px;
  margin: 0 80px;
  padding: 32px;
  border: 2px solid #e2c793;
  border-left: 8px solid ${colors.amber};
  border-radius: 20px;
  background: #fff;
  font-family: 'Liberation Sans', 'Noto Sans CJK SC', sans-serif;
`;
const SuggestHead = styled.div`
  display: flex;
  align-items: center;
  height: 56px;
  font-size: 28px;
  font-weight: 700;
  color: #1f2937;
`;
const SuggestTitle = styled.span`
  padding-bottom: 3px;
`;
const Marker = styled.svg`
  width: 22px;
  height: 20px;
  margin-right: 18px;
  fill: ${colors.amber};
`;
const Items = styled.span`
  margin-left: 12px;
  font-weight: 400;
  color: ${colors.gray};
`;
const AddAll = styled.button`
  height: 56px;
  margin-left: auto;
  padding: 0 24px;
  border: 0;
  border-radius: 12px;
  background: ${colors.amber};
  color: #fff;
  font-family: ${sans};
  font-size: 24px;
  font-weight: 700;
`;
const GroupHead = styled.div`
  display: flex;
  align-items: center;
  height: 40px;
  margin: 22px 0 12px;
  font-size: 26px;
  font-weight: 700;
`;
const GroupNote = styled.span`
  margin-left: 15px;
  font-family: ${sans};
  font-size: 22px;
  font-weight: 400;
  color: ${colors.gray};
`;
const Chips = styled.div`
  display: flex;
  gap: 13px;
`;
const Chip = styled.span`
  display: flex;
  align-items: center;
  gap: 12px;
  height: 60px;
  padding: 0 24px 2px;
  border: 2px solid #e5c998;
  border-radius: 30px;
  font-size: 24px;
  color: #1f2937;
`;
const ChipPlus = styled.b`
  color: ${colors.amber};
`;

const tabs = [
  ['fileText', '顶部表'],
  ['chart', '成本报告'],
  ['trendDown', '差异'],
  ['chart', '预测'],
  ['fileText', '采购订单'],
  ['wallet', '零用现金'],
  ['banknote', '费率卡'],
  ['percent', '激励措施'],
  ['sigma', '附加费用'],
  ['activity', '现金流'],
  ['receipt', '出价'],
  ['history', '历史'],
];
const issues = [
  [3, '关键', '超出预算、逾期或没有文书的支出跟踪', colors.red, '#e39a9a'],
  [9, '需要关注', '未签署的文书，等待授权，或 90% 以上的消耗', colors.orange, '#e2b987'],
  [1, '未签署的文书', '文件中有报价或协议，合同尚未签署', colors.purple, '#b9a0e2'],
  [3, '待授权', '已开票，等待您的付款授权', colors.teal, '#90c3d0'],
  [3, '逾期发票', '发票到期日已过，仍未付款', colors.darkRed, '#d69494'],
];

const Overview = () => (
  <Card>
    <BudgetBar>
      <BudgetInput>
        <InputLabel>预算</InputLabel>£<InputValue>3385000</InputValue>
        <CurrencySelect>
          GBP
          <Icon name="chevronDown" size={28} stroke={3.4} />
        </CurrencySelect>
      </BudgetInput>
      <FxPill>
        <Icon name="globe" size={24} />
        <FxText>FX · 1 英镑</FxText>
        <FxRefresh>↻</FxRefresh>
      </FxPill>
    </BudgetBar>
    <OverviewHead>
      <Eyebrow>预算概览</Eyebrow>
      <HideMetrics>
        隐藏指标
        <Icon name="chevronDown" size={22} />
      </HideMetrics>
    </OverviewHead>
    <Metrics>
      <Metric>
        <MetricHead $tall>
          <MetricBadge>£</MetricBadge>
          <MetricName>总估算</MetricName>
        </MetricHead>
        <MetricValue $tall>£3,385,000</MetricValue>
      </Metric>
      <Metric>
        <MetricHead $tall>
          <MetricBadge>£</MetricBadge>
          <MetricName>实际总计</MetricName>
        </MetricHead>
        <MetricValue $tall>£3,235,715</MetricValue>
      </Metric>
      <Metric>
        <MetricHead $tall>
          <MetricBadge $green>▼</MetricBadge>
          <MetricName>预算节余</MetricName>
        </MetricHead>
        <MetricValue $tall>
          £149,285<Remaining>剩余</Remaining>
        </MetricValue>
      </Metric>
      <Metric>
        <MetricHead>已用预算</MetricHead>
        <MetricValue>96%</MetricValue>
        <UsedTrack>
          <UsedFill style={{width: '96%'}} />
        </UsedTrack>
        <MetricNote>£149,285</MetricNote>
      </Metric>
      <Metric>
        <MetricHead>已承诺（采购订单）</MetricHead>
        <MetricValue>£246,800</MetricValue>
      </Metric>
      <Metric>
        <MetricHead>剩余预算</MetricHead>
        <MetricValue>£97,515</MetricValue>
      </Metric>
    </Metrics>
    <Health>
      <HealthHead>
        <ShieldBox>
          <Icon name="shield" size={28} />
        </ShieldBox>
        <HealthTitle>预算 · 账本健康</HealthTitle>
        <Alert>
          <Dot $size={16} $color={colors.red} />
          68行中有12行需要您
        </Alert>
      </HealthHead>
      <HealthBar>
        <HealthPart $n={56} $color={colors.green} />
        <HealthPart $n={9} $color={colors.orange} />
        <HealthPart $n={3} $color={colors.red} />
      </HealthBar>
      <HealthNote>56 的 68 线s 清理 · 9行需要关注 · 3 个关键问题</HealthNote>
      <Issues>
        {issues.map(([count, title, text, color, line]) => (
          <Issue key={title} $line={line}>
            <IssueHead>
              <IssueCount $color={color}>{count}</IssueCount>
              {title}
            </IssueHead>
            <IssueText>{text}</IssueText>
          </Issue>
        ))}
      </Issues>
      <Actions $margin="28px 0 0">
        <SolidButton $h={66} $bg={colors.green}>
          付款与导出 · 3 待授权
        </SolidButton>
        <PillButton>审查差异</PillButton>
      </Actions>
    </Health>
  </Card>
);

const AiSuggestions = () => (
  <Suggestions>
    <SuggestHead>
      <Marker viewBox="0 0 22 20">
        <path d="M3 2h16l-8 15z" />
      </Marker>
      <SuggestTitle>
        来自分解的AI建议
        <Items>— 27 items</Items>
      </SuggestTitle>
      <AddAll>+ 添加全部</AddAll>
    </SuggestHead>
    <GroupHead>
      <Marker viewBox="0 0 22 20">
        <path d="M0 20 11 0l11 20z" />
      </Marker>
      道具
      <GroupNote>分解识别出17个独特道具。</GroupNote>
    </GroupHead>
    <Chips>
      {['道具购买预算', '道具租赁', '道具取货的小额现金'].map((text) => (
        <Chip key={text}>
          <ChipPlus>+</ChipPlus>
          {text}
        </Chip>
      ))}
    </Chips>
  </Suggestions>
);

const App = () => {
  return (
    <Page>
      <GlobalStyle />
      <TopHeader />
      <Body>
        <BudgetSidebar />
        <Main>
          <Tabs>
            {tabs.map(([icon, text]) => (
              <Tab key={text} $active={text === '成本报告'}>
                <Icon name={icon} size={28} />
                {text}
              </Tab>
            ))}
          </Tabs>
          <Content>
            <Eyebrow>预算 · 成本报告</Eyebrow>
            <Title>成本报告</Title>
            <Stage>制作</Stage>
            <Subtitle>Origin: Ascension · 19 部门s · 68 线s</Subtitle>
            <Actions $margin="29px 0 40px 64px">
              <PillButton>更改模板</PillButton>
              <PillButton>从分解导入</PillButton>
              <PillButton>导出PDF</PillButton>
              <PillButton>预算报告</PillButton>
              <PillButton $green>付款与导出</PillButton>
              <PillButton>导入工时卡</PillButton>
              <SolidButton $h={62} $bg={colors.amber}>
                + 部门
              </SolidButton>
            </Actions>
            <Overview />
            <Divider />
            <AiSuggestions />
          </Content>
        </Main>
      </Body>
    </Page>
  );
};

export default App;
